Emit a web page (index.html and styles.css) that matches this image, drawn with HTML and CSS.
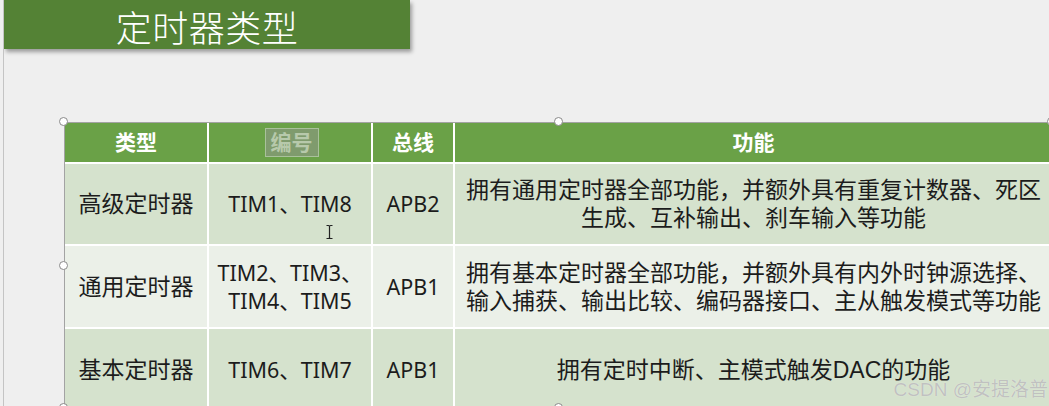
FILE: index.html
```html
<!DOCTYPE html>
<html lang="zh">
<head>
<meta charset="utf-8">
<title>定时器类型</title>
<link rel="stylesheet" href="styles.css">
</head>
<body>
<div class="slide">
  <div class="title-bar"><span class="title">定时器类型</span></div>
  <div class="table-wrap">
    <div class="grid">
      <div class="cell head">类型</div>
      <div class="cell head"><span class="sel-text">编号</span></div>
      <div class="cell head">总线</div>
      <div class="cell head">功能</div>

      <div class="cell band">高级定时器</div>
      <div class="cell band code">TIM1、TIM8</div>
      <div class="cell band code">APB2</div>
      <div class="cell band">拥有通用定时器全部功能，并额外具有重复计数器、死区<br>生成、互补输出、刹车输入等功能</div>

      <div class="cell light">通用定时器</div>
      <div class="cell light code">TIM2、TIM3、<br>TIM4、TIM5</div>
      <div class="cell light code">APB1</div>
      <div class="cell light">拥有基本定时器全部功能，并额外具有内外时钟源选择、<br>输入捕获、输出比较、编码器接口、主从触发模式等功能</div>

      <div class="cell band">基本定时器</div>
      <div class="cell band code">TIM6、TIM7</div>
      <div class="cell band code">APB1</div>
      <div class="cell band">拥有定时中断、主模式触发DAC的功能</div>
    </div>
    <div class="frame"></div>
    <span class="handle h-tl"></span>
    <span class="handle h-tm"></span>
    <span class="handle h-tr"></span>
    <span class="handle h-ml"></span>
    <span class="handle h-bl"></span>
    <span class="handle h-bm"></span>
    <svg class="ibeam" width="9" height="16" viewBox="0 0 9 16" aria-hidden="true">
      <path d="M1.5 1.5 H3.5 Q4.5 1.5 4.5 2.5 V13.5 Q4.5 14.5 3.5 14.5 H1.5 M7.5 1.5 H5.5 Q4.5 1.5 4.5 2.5 M4.5 13.5 Q4.5 14.5 5.5 14.5 H7.5" fill="none" stroke="#222" stroke-width="1.2"/>
    </svg>
  </div>
  <div class="watermark">CSDN @安提洛普</div>
</div>
</body>
</html>
```

FILE: styles.css
```css
html, body {
  margin: 0;
  padding: 0;
  overflow: hidden;
  background: #efefef;
}

.slide {
  position: relative;
  width: 1049px;
  height: 406px;
  overflow: hidden;
  margin-left: 3px;
  border-left: 1px solid #c4c4c4;
  box-sizing: border-box;
  font-family: "Liberation Sans", "Noto Sans CJK SC", sans-serif;
}

.title-bar {
  width: 406px;
  height: 49px;
  background: #548235;
  box-shadow: 2px 3px 4px rgba(0, 0, 0, 0.35);
  display: flex;
  align-items: center;
  justify-content: center;
}

.title {
  color: #ffffff;
  font-family: "Noto Sans CJK SC", sans-serif;
  font-size: 36px;
  font-weight: 300;
  line-height: 40px;
  letter-spacing: 0.5px;
  margin-top: 2px;
}

.table-wrap {
  position: relative;
  margin-top: 74px;
  margin-left: 61px;
  width: 987px;
}

.grid {
  display: grid;
  grid-template-columns: 142px 162px 80px 597px;
  grid-template-rows: 39px 80px 81px 81px;
  column-gap: 2px;
  row-gap: 2px;
  background: #ffffff;
}

.cell {
  display: flex;
  align-items: center;
  justify-content: center;
  text-align: center;
  font-family: "Liberation Sans", "Noto Sans CJK SC", sans-serif;
  font-size: 23px;
  line-height: 28px;
  color: #1c1c1c;
}

.code {
  font-family: "Noto Sans", "Noto Sans CJK SC", sans-serif;
  font-size: 21.5px;
  line-height: 28px;
}

.head {
  background: #6aa147;
  color: #ffffff;
  font-weight: bold;
  font-size: 21px;
}

.band {
  background: #d5e2cd;
}

.light {
  background: #ebf0e8;
}

.sel-text {
  display: inline-block;
  background: #7f9b6d;
  border: 1px solid #a9c19b;
  color: #b7c9ab;
  padding: 0 5px;
  line-height: 27px;
  margin-left: 3px;
}

.frame {
  position: absolute;
  left: -1px;
  top: -1px;
  right: -1px;
  height: 300px;
  border: 1px solid #a3a3a3;
  pointer-events: none;
}

.handle {
  position: absolute;
  width: 9px;
  height: 9px;
  border-radius: 50%;
  background: #ffffff;
  border: 1.5px solid #8a8a8a;
  box-sizing: border-box;
}

.h-tl { left: -6px; top: -6px; }
.h-tm { left: 489px; top: -6px; }
.h-tr { left: 982px; top: -6px; }
.h-ml { left: -6px; top: 138px; }
.h-bl { left: -6px; top: 280px; }
.h-bm { left: 489px; top: 280px; }

.ibeam {
  position: absolute;
  left: 260px;
  top: 101px;
}

.watermark {
  position: absolute;
  right: 4px;
  bottom: 6px;
  font-family: "Liberation Sans", "Noto Sans CJK SC", sans-serif;
  font-size: 19px;
  line-height: 20px;
  color: rgba(185, 185, 185, 0.85);
  text-shadow: 0 0 1px rgba(255, 255, 255, 0.6);
}
```
